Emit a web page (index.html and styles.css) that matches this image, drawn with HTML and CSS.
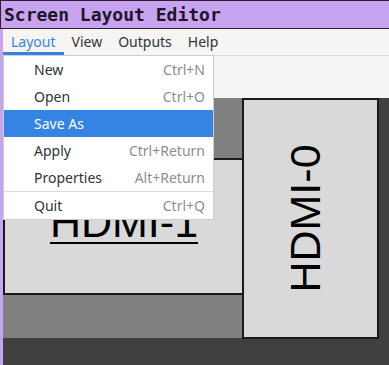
FILE: index.html
```html
<!DOCTYPE html>
<html lang="en">
<head>
    <meta charset="UTF-8">
    <meta name="viewport" content="width=device-width, initial-scale=1.0">
    <title>Screen Layout Editor</title>
    <link rel="stylesheet" href="styles.css">
</head>
<body>
    <div class="titlebar">Screen Layout Editor</div>

    <div class="client">
        <div class="menubar">
            <span class="menu-title active">Layout</span>
            <span class="menu-title">View</span>
            <span class="menu-title">Outputs</span>
            <span class="menu-title">Help</span>
        </div>

        <div class="toolbar"></div>

        <div class="canvas">
            <!-- bounding box of all outputs -->
            <div class="screen">
                <div class="output hdmi1"><span class="label underline">HDMI-1</span></div>
                <div class="output hdmi0"><span class="label rotated">HDMI-0</span></div>
            </div>
        </div>

        <!-- open Layout menu -->
        <div class="dropdown">
            <div class="item"><span>New</span><span class="accel">Ctrl+N</span></div>
            <div class="item"><span>Open</span><span class="accel">Ctrl+O</span></div>
            <div class="item selected"><span>Save As</span><span class="accel"></span></div>
            <div class="item"><span>Apply</span><span class="accel">Ctrl+Return</span></div>
            <div class="item"><span>Properties</span><span class="accel">Alt+Return</span></div>
            <div class="separator"></div>
            <div class="item"><span>Quit</span><span class="accel">Ctrl+Q</span></div>
        </div>
    </div>
</body>
</html>
```

FILE: styles.css
```css
body {
    margin: 0;
    background-color: #c8a4f0;
    font-family: "Noto Sans", sans-serif;
    overflow: hidden;
}
.titlebar {
    height: 27px;
    border-top: 1px solid #2a2233;
    border-left: 1px solid #2a2233;
    border-bottom: 1px solid #2a2233;
    padding-left: 3px;
    font-family: "DejaVu Sans Mono", monospace;
    font-weight: bold;
    font-size: 18px;
    line-height: 27px;
    color: #1c1626;
}
.client {
    position: relative;
    margin-left: 3px;
    background-color: #f6f5f4;
}
.menubar {
    display: flex;
    height: 26px;
    border-bottom: 1px solid #dcdad7;
}
.menu-title {
    padding: 0 8px;
    font-size: 14px;
    line-height: 25px;
    color: #2e3436;
    border-bottom: 3px solid transparent;
    height: 23px;
}
.menu-title.active {
    color: #3584e4;
    border-bottom-color: #3584e4;
}
.toolbar {
    height: 42px;
}
.canvas {
    height: 267px;
    background-color: #404040;
}
.screen {
    position: relative;
    width: 375px;
    height: 240px;
    background-color: #808080;
}
.output {
    position: absolute;
    box-sizing: border-box;
    display: flex;
    align-items: center;
    justify-content: center;
    background-color: #d9d9d9;
    border: 2px solid #1a1a1a;
    font-family: "Liberation Sans", Arial, sans-serif;
    font-size: 43px;
    color: #000;
}
.hdmi1 {
    left: 0;
    top: 60px;
    width: 242px;
    height: 137px;
    padding-bottom: 8px;
}
.hdmi0 {
    left: 239px;
    top: 0;
    width: 137px;
    height: 241px;
    padding-right: 10px;
}
.underline {
    text-decoration: underline;
    text-decoration-thickness: 2px;
    text-underline-offset: 5px;
}
.rotated {
    transform: rotate(-90deg);
    white-space: nowrap;
}
.dropdown {
    position: absolute;
    left: 0;
    top: 26px;
    width: 209px;
    background-color: #ffffff;
    border: 1px solid #d0cecb;
    font-size: 14px;
    color: #2e3436;
}
.item {
    display: flex;
    justify-content: space-between;
    height: 27px;
    line-height: 27px;
    padding: 0 8px 0 30px;
}
.item.selected {
    background-color: #3584e4;
    color: #ffffff;
}
.accel {
    color: #8b8e8f;
}
.separator {
    height: 1px;
    background-color: #dcdad7;
}
```
